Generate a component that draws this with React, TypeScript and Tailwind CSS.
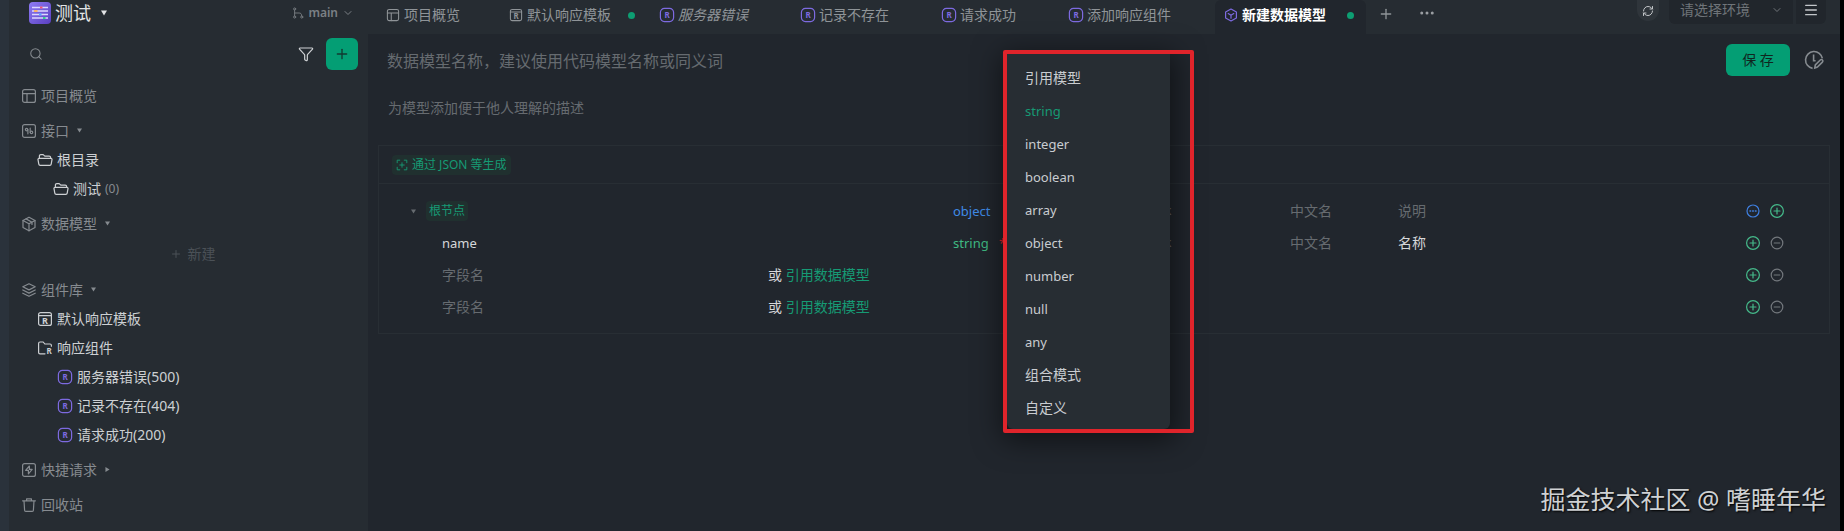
import type { ReactNode } from 'react';
import { ChevronDown, Ellipsis, Funnel, Menu, Plus, RefreshCw, Search } from 'lucide-react';

type IconProps = { className?: string; children?: ReactNode };

function Glyph({ className = 'size-4', children }: IconProps) {
  return (
    <svg
      viewBox="0 0 16 16"
      fill="none"
      stroke="currentColor"
      strokeWidth="1.2"
      strokeLinecap="round"
      strokeLinejoin="round"
      className={`${className} shrink-0`}
      aria-hidden="true"
    >
      {children}
    </svg>
  );
}

function LetterR({ x, y, size }: { x: number; y: number; size: number }) {
  return (
    <text x={x} y={y} fontSize={size} fontWeight="700" textAnchor="middle" fill="currentColor" stroke="none">
      R
    </text>
  );
}

const LayoutIcon = ({ className }: IconProps) => (
  <Glyph className={className}>
    <rect x="1.6" y="1.6" width="12.8" height="12.8" rx="2" />
    <path d="M1.6 5.6h12.8M6 5.6v8.8" />
  </Glyph>
);

const ApiIcon = () => (
  <Glyph>
    <rect x="1.6" y="1.6" width="12.8" height="12.8" rx="2" />
    <circle cx="5.6" cy="6.6" r="1.2" />
    <path d="M6.9 6.6v4.2M9.2 5.2v4.2" />
    <circle cx="10.5" cy="9.4" r="1.2" />
  </Glyph>
);

const FolderIcon = () => (
  <Glyph>
    <path d="M2.4 6.2V4c0-.8.6-1.4 1.4-1.4h2.4l1.6 1.6h4.4c.8 0 1.4.6 1.4 1.4v.6" />
    <path d="M2 6.4h12c.7 0 1.2.6 1 1.3l-.8 4.5c-.1.7-.7 1.2-1.4 1.2H3.2c-.7 0-1.3-.5-1.4-1.2L1 7.7c-.2-.7.3-1.3 1-1.3z" />
  </Glyph>
);

const CubeIcon = () => (
  <Glyph>
    <path d="M8 1.2l6 3.3v7L8 14.8l-6-3.3v-7z" />
    <path d="M2 4.5l6 3.3 6-3.3M8 7.8v7M5 2.9l6 3.3v2.2" />
  </Glyph>
);

const LayersIcon = () => (
  <Glyph>
    <path d="M8 1.8l6.2 3L8 7.9 1.8 4.8z" />
    <path d="M1.8 8L8 11.1 14.2 8M1.8 11.2L8 14.3l6.2-3.1" />
  </Glyph>
);

const TemplateIcon = ({ className }: IconProps) => (
  <Glyph className={className}>
    <rect x="1.6" y="1.6" width="12.8" height="12.8" rx="2" />
    <path d="M1.6 4.6h12.8" />
    <LetterR x={8} y={12.6} size={9} />
  </Glyph>
);

const ResponseFolderIcon = () => (
  <Glyph>
    <path d="M8 13.8H3c-.8 0-1.4-.6-1.4-1.4V3.4C1.6 2.6 2.2 2 3 2h3.2l1.6 2H13c.8 0 1.4.6 1.4 1.4v.8" />
    <LetterR x={12} y={14} size={8} />
  </Glyph>
);

const ResponseIcon = () => (
  <span className="text-[#7d6ae0]">
    <Glyph>
      <rect x="1.4" y="1.4" width="13.2" height="13.2" rx="4" />
      <LetterR x={8} y={11} size={8} />
    </Glyph>
  </span>
);

const ModelIcon = () => (
  <span className="text-[#7d6ae0]">
    <Glyph>
      <path d="M8 2l5.4 3v6L8 14l-5.4-3V5z" />
      <path d="M5.2 6.6L8 8.2l2.8-1.6M8 8.2v3" />
    </Glyph>
  </span>
);

const BoltIcon = () => (
  <Glyph>
    <rect x="1.6" y="1.6" width="12.8" height="12.8" rx="2" />
    <path d="M8.4 4L4.6 8.4h2.8v3.4l3.8-4.4H8.4z" />
  </Glyph>
);

const TrashIcon = () => (
  <Glyph>
    <path d="M1.6 3.8h12.8M5.6 3.6V1.8h4.8v1.8M3 3.8l.6 9.4c0 .7.6 1.2 1.2 1.2h6.4c.7 0 1.2-.5 1.2-1.2L13 3.8" />
  </Glyph>
);

const GenerateIcon = () => (
  <Glyph className="size-3">
    <path d="M1.6 5V1.6H5M11 1.6h3.4V5M14.4 11v3.4H11M5 14.4H1.6V11M8 5v6M5 8h6" />
  </Glyph>
);

const HistoryIcon = () => (
  <svg viewBox="0 0 20 20" fill="none" stroke="currentColor" strokeWidth="1.6" className="size-5" aria-hidden="true">
    <path d="M8.6 18.4A8.5 8.5 0 1 1 18.4 8.4" />
    <path d="M9.6 4.4v6.4h2" />
    <path d="M10.8 18l.5-3 5-5c.6-.6 1.5-.6 2.1 0s.6 1.5 0 2.1l-5 5z" />
  </svg>
);

const BranchIcon = () => (
  <Glyph className="size-3">
    <circle cx="3.5" cy="2.6" r="1.4" />
    <circle cx="3.5" cy="13.4" r="1.4" />
    <circle cx="13" cy="13.4" r="1.4" />
    <path d="M3.5 4v8M3.5 8h6c2 0 3.5 1 3.5 4" />
  </Glyph>
);

const MoreCircle = () => (
  <Glyph>
    <circle cx="8" cy="8" r="6" />
    <path d="M5 8h.6M7.7 8h.6M10.4 8h.6" strokeWidth="1.6" />
  </Glyph>
);

const PlusCircle = () => (
  <Glyph>
    <circle cx="8" cy="8" r="6.4" />
    <path d="M8 5v6M5 8h6" />
  </Glyph>
);

const MinusCircle = () => (
  <Glyph>
    <circle cx="8" cy="8" r="5.8" />
    <path d="M5.2 8h5.6" />
  </Glyph>
);

function Caret({ open = true, className = 'size-[5px]' }: { open?: boolean; className?: string }) {
  return (
    <svg viewBox="0 0 6 6" fill="currentColor" className={`${className} shrink-0`} aria-hidden="true">
      {open ? <path d="M0 0.5h6L3 5.5z" /> : <path d="M0.5 0v6L5.5 3z" />}
    </svg>
  );
}

function Logo() {
  return (
    <svg viewBox="0 0 22 22" className="size-[22px] shrink-0" aria-hidden="true">
      <defs>
        <linearGradient id="logo" x1="0" y1="0" x2="1" y2="1">
          <stop offset="0" stopColor="#8f7cf5" />
          <stop offset="1" stopColor="#5a3fc0" />
        </linearGradient>
      </defs>
      <rect width="22" height="22" rx="4" fill="url(#logo)" />
      <path d="M3 5.5h16M3 9h16M3 12.5h16M3 16h16" stroke="#dcd6ff" strokeWidth="1.3" />
      <path d="M11 5.5h2.5" stroke="#f2557a" strokeWidth="2" />
      <path d="M5 9h3.5" stroke="#f7b267" strokeWidth="2" />
      <path d="M10 12.5h2.5" stroke="#5aa9ff" strokeWidth="2" />
      <path d="M14 16h2.5" stroke="#2fd18b" strokeWidth="2" />
    </svg>
  );
}

function Section({ icon, label, caret }: { icon: ReactNode; label: string; caret?: 'open' | 'closed' }) {
  return (
    <button type="button" className="mt-1.5 flex h-[29px] w-full items-center gap-1 pl-3 text-[#868b90]">
      {icon}
      <span>{label}</span>
      {caret && (
        <span className="ml-1">
          <Caret open={caret === 'open'} />
        </span>
      )}
    </button>
  );
}

function TreeItem({ icon, label, count, indent }: { icon: ReactNode; label: string; count?: string; indent: string }) {
  return (
    <button type="button" className={`flex h-[29px] w-full items-center gap-1 text-[#cdd0d3] ${indent}`}>
      {icon}
      <span>{label}</span>
      {count && <span className="text-xs text-[#868b90]">{count}</span>}
    </button>
  );
}

function Sidebar() {
  return (
    <aside className="flex w-[359px] shrink-0 flex-col bg-[#262c32] pb-3">
      <div className="flex h-[25px] items-center pr-3.5 pl-5">
        <button type="button" className="flex items-center gap-1 text-lg leading-6 text-[#e2e4e6]">
          <Logo />
          <span>测试</span>
          <Caret className="ml-1.5 size-1.5" />
        </button>
        <button type="button" className="ml-auto flex items-center gap-1 text-xs font-semibold text-[#7b8085]">
          <BranchIcon />
          main
          <ChevronDown className="size-3" />
        </button>
      </div>

      <div className="mt-[13px] flex h-8 items-center pr-2.5 pl-5">
        <Search className="size-3.5 shrink-0 text-[#868b90]" strokeWidth={1.8} />
        <input aria-label="搜索" className="min-w-0 flex-1 bg-transparent px-2 outline-none" />
        <button type="button" aria-label="筛选" className="mr-3 text-[#cdd0d3]">
          <Funnel className="size-4" strokeWidth={1.8} />
        </button>
        <button
          type="button"
          aria-label="新增"
          className="flex size-8 items-center justify-center rounded-md bg-[#049e74] text-[#123a30]"
        >
          <Plus className="size-4" strokeWidth={2} />
        </button>
      </div>

      <nav className="mt-[5px]">
        <Section icon={<LayoutIcon />} label="项目概览" />
        <Section icon={<ApiIcon />} label="接口" caret="open" />
        <TreeItem icon={<FolderIcon />} label="根目录" indent="pl-7" />
        <TreeItem icon={<FolderIcon />} label="测试" count="(0)" indent="pl-11" />
        <Section icon={<CubeIcon />} label="数据模型" caret="open" />
        <button type="button" className="flex h-[31px] w-full items-center justify-center gap-1.5 pl-2 text-[#4b5157]">
          <Plus className="size-3" />
          新建
        </button>
        <Section icon={<LayersIcon />} label="组件库" caret="open" />
        <TreeItem icon={<TemplateIcon />} label="默认响应模板" indent="pl-7" />
        <TreeItem icon={<ResponseFolderIcon />} label="响应组件" indent="pl-7" />
        <TreeItem icon={<ResponseIcon />} label="服务器错误(500)" indent="pl-12" />
        <TreeItem icon={<ResponseIcon />} label="记录不存在(404)" indent="pl-12" />
        <TreeItem icon={<ResponseIcon />} label="请求成功(200)" indent="pl-12" />
        <Section icon={<BoltIcon />} label="快捷请求" caret="closed" />
        <Section icon={<TrashIcon />} label="回收站" />
      </nav>
    </aside>
  );
}

const Dot = () => <span className="block size-[7px] rounded-full bg-[#0d9e72]" />;

const TABS = [
  { label: '项目概览', icon: <LayoutIcon className="mx-px size-3.5" />, slot: 'w-10' },
  { label: '默认响应模板', icon: <TemplateIcon className="mx-px size-3.5" />, slot: 'w-10', dirty: true },
  { label: '服务器错误', icon: <ResponseIcon />, slot: 'w-11', preview: true },
  { label: '记录不存在', icon: <ResponseIcon />, slot: 'w-11' },
  { label: '请求成功', icon: <ResponseIcon />, slot: 'w-11' },
  { label: '添加响应组件', icon: <ResponseIcon />, slot: 'w-11' },
  { label: '新建数据模型', icon: <ModelIcon />, slot: 'w-10 pl-2', dirty: true, active: true },
];

function TabBar() {
  return (
    <header className="flex h-[34px] items-start bg-[#262c32]">
      <div className="flex h-full items-stretch pl-[9px]">
        {TABS.map((tab) => (
          <button
            key={tab.label}
            type="button"
            className={`flex items-center gap-[3px] pb-1 pl-2 whitespace-nowrap ${
              tab.active ? 'rounded-t-md bg-[#21262d] font-semibold text-white' : 'text-[#8f9498]'
            }`}
          >
            {tab.icon}
            <span className={tab.preview ? 'italic' : ''}>{tab.label}</span>
            <span className={`-ml-[3px] flex justify-center ${tab.slot}`}>{tab.dirty && <Dot />}</span>
          </button>
        ))}
      </div>
      <button type="button" aria-label="新建标签" className="ml-3 flex h-7 items-center text-[#8f9498]">
        <Plus className="size-4" />
      </button>
      <button type="button" aria-label="更多" className="ml-6 flex h-[26px] items-center text-[#9a9ea2]">
        <Ellipsis className="size-[18px]" />
      </button>

      <div className="ml-auto flex items-start pr-3.5">
        <button
          type="button"
          aria-label="刷新"
          className="mr-2.5 flex h-[21px] w-[22px] items-center justify-center rounded-b-full bg-[#2f353b] text-[#c3c6c9]"
        >
          <RefreshCw className="size-3" />
        </button>
        <div className="relative mr-[3px] w-[124px]">
          <select
            aria-label="环境"
            className="h-6 w-full appearance-none rounded-bl-md bg-[#21262c] pb-1 pl-[11px] text-sm leading-5 text-[#6f7479] outline-none"
          >
            <option>请选择环境</option>
          </select>
          <ChevronDown className="pointer-events-none absolute top-1 right-2.5 size-3 text-[#6f7479]" />
        </div>
        <button
          type="button"
          aria-label="菜单"
          className="flex h-6 w-[30px] items-center justify-center rounded-br-md bg-[#21262c] pb-1 text-[#c3c6c9]"
        >
          <Menu className="size-4" />
        </button>
      </div>
    </header>
  );
}

const TYPES = ['引用模型', 'string', 'integer', 'boolean', 'array', 'object', 'number', 'null', 'any', '组合模式', '自定义'];

function TypeMenu() {
  return (
    <div className="absolute -top-[177px] left-[50px] z-10 h-[383px] w-[191px] p-1">
      <ul className="h-full w-[163px] rounded-b-md bg-[#272d33] pt-[7px] text-[#c9ccd0] shadow-[0_6px_28px_6px_rgba(0,0,0,0.5)]">
        {TYPES.map((type) => (
          <li key={type}>
            <button
              type="button"
              className={`flex h-[33px] w-full items-center pl-[18px] ${
                /^[a-z]/.test(type) ? 'pt-0.5 text-[13px]' : 'text-sm'
              } ${type === 'string' ? 'text-[#169a74]' : ''}`}
            >
              {type}
            </button>
          </li>
        ))}
      </ul>
      {/* highlight frame stays above the menu's shadow */}
      <div className="pointer-events-none absolute inset-0 rounded-xs border-4 border-[#e0242b]" />
    </div>
  );
}

const cellInput = 'w-full min-w-0 bg-transparent outline-none placeholder:text-[#666b70]';

function RowActions() {
  return (
    <div className="flex gap-2 pl-1">
      <button type="button" aria-label="添加" className="text-[#45b98a]">
        <PlusCircle />
      </button>
      <button type="button" aria-label="删除" className="text-[#73787d]">
        <MinusCircle />
      </button>
    </div>
  );
}

function SchemaTable() {
  return (
    <table className="w-full table-fixed border-collapse">
      <colgroup>
        <col />
        <col className="w-[188px]" />
        <col className="w-[149px]" />
        <col className="w-[108px]" />
        <col className="w-[343px]" />
        <col className="w-[88px]" />
      </colgroup>
      <tbody>
        <tr className="h-8">
          <td className="p-0">
            <div className="flex items-center pl-8">
              <button type="button" aria-label="折叠" className="text-[#666b70]">
                <Caret />
              </button>
              <span className="ml-2.5 rounded-sm bg-[#20302f] px-[3px] text-xs leading-5 text-[#169a74]">根节点</span>
            </div>
          </td>
          <td className="p-0">
            <button type="button" className="block text-[13px] text-[#3f8ae6]">
              object
            </button>
          </td>
          <td className="p-0 text-xs text-[#666b70]">Mock</td>
          <td className="p-0">
            <input aria-label="根节点中文名" placeholder="中文名" className={cellInput} />
          </td>
          <td className="p-0">
            <input aria-label="根节点说明" placeholder="说明" className={cellInput} />
          </td>
          <td className="p-0">
            <div className="flex gap-2 pl-1">
              <button type="button" aria-label="高级设置" className="text-[#3f7fe0]">
                <MoreCircle />
              </button>
              <button type="button" aria-label="添加子节点" className="text-[#45b98a]">
                <PlusCircle />
              </button>
            </div>
          </td>
        </tr>
        <tr className="h-8">
          <td className="p-0 pl-[63px]">
            <input aria-label="字段名" defaultValue="name" className={`${cellInput} text-[13px] text-[#d5d7d9]`} />
          </td>
          <td className="relative p-0">
            <div className="flex items-center text-[13px]">
              <button type="button" className="w-[46px] text-left text-[#3fb983]">
                string
              </button>
              <span className="text-[#e0242b]">*</span>
            </div>
            <TypeMenu />
          </td>
          <td className="p-0 text-xs text-[#666b70]">Mock</td>
          <td className="p-0">
            <input aria-label="name 中文名" placeholder="中文名" className={cellInput} />
          </td>
          <td className="p-0">
            <input aria-label="name 说明" defaultValue="名称" className={`${cellInput} text-[#d5d7d9]`} />
          </td>
          <td className="p-0">
            <RowActions />
          </td>
        </tr>
        {[1, 2].map((row) => (
          <tr key={row} className="h-8">
            <td className="p-0 pl-[63px]">
              <div className="flex items-center">
                <input aria-label={`新字段 ${row}`} placeholder="字段名" className={`${cellInput} flex-1`} />
                <span className="w-[185px] shrink-0 text-[#d5d7d9]">
                  或{' '}
                  <a href="#ref" className="text-[#169a74]">
                    引用数据模型
                  </a>
                </span>
              </div>
            </td>
            <td colSpan={4} className="p-0" />
            <td className="p-0">
              <RowActions />
            </td>
          </tr>
        ))}
      </tbody>
    </table>
  );
}

function ModelEditor() {
  return (
    <div className="flex flex-1 flex-col px-2.5 pt-2.5">
      <div className="flex h-8 items-center pr-1.5 pl-[9px]">
        <input
          aria-label="模型名称"
          placeholder="数据模型名称，建议使用代码模型名称或同义词"
          className="min-w-0 flex-1 bg-transparent pt-0.5 text-base outline-none placeholder:text-[#666b70]"
        />
        <button type="button" className="mr-3.5 h-8 w-16 rounded-md bg-[#049e74] text-[#10261f]">
          保 存
        </button>
        <button type="button" aria-label="历史" className="text-[#868b90]">
          <HistoryIcon />
        </button>
      </div>
      <input
        aria-label="模型描述"
        placeholder="为模型添加便于他人理解的描述"
        className="mt-[19px] h-6 bg-transparent pl-2.5 outline-none placeholder:text-[#666b70]"
      />

      <section className="mt-[26px] border border-[#282e34] pb-2.5">
        <div className="flex h-[38px] items-center border-b border-[#282e34] pl-[13px]">
          <button
            type="button"
            className="flex h-5 items-center gap-1 rounded-sm bg-[#20302f] px-1 text-xs text-[#169a74]"
          >
            <GenerateIcon />
            通过 JSON 等生成
          </button>
        </div>
        <div className="pt-[11px]">
          <SchemaTable />
        </div>
      </section>

      <p className="mt-auto mr-1 mb-3.5 self-end text-[25px] leading-9 text-[#cfd1d3] [text-shadow:1px_1px_2px_#000]">
        掘金技术社区 @ 嗜睡年华
      </p>
    </div>
  );
}

export default function App() {
  return (
    <div className="flex min-h-screen border-r-4 border-b border-r-black border-b-[#15181d] bg-[#21262d] font-['Noto_Sans','Noto_Sans_CJK_SC',sans-serif] text-sm">
      <div className="w-[9px] shrink-0 bg-[#2a323b]" />
      <Sidebar />
      <main className="flex min-w-0 flex-1 flex-col">
        <TabBar />
        <ModelEditor />
      </main>
    </div>
  );
}
